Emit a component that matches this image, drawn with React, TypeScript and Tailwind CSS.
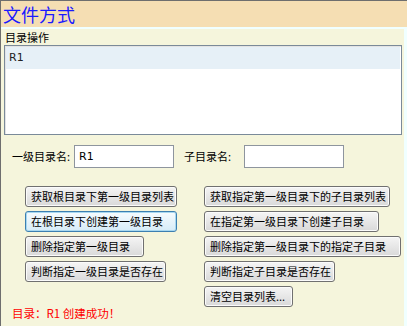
const CJK = "font-['Noto_Sans_CJK_SC',sans-serif]";

type Btn = { label: string; w: string; focused?: boolean };

const leftButtons: Btn[] = [
  { label: "获取根目录下第一级目录列表", w: "w-[152px]" },
  { label: "在根目录下创建第一级目录", w: "w-[152px]", focused: true },
  { label: "删除指定第一级目录", w: "w-[119px]" },
  { label: "判断指定一级目录是否存在", w: "w-[141px]" },
];

const rightButtons: Btn[] = [
  { label: "获取指定第一级目录下的子目录列表", w: "w-[186px]" },
  { label: "在指定第一级目录下创建子目录", w: "w-[175px]" },
  { label: "删除指定第一级目录下的指定子目录", w: "w-[197px]" },
  { label: "判断指定子目录是否存在", w: "w-[131px]" },
  { label: "清空目录列表...", w: "w-[89px]" },
];

function WinButton({ label, w, focused }: Btn) {
  return (
    <button
      className={`${w} h-[21px] shrink-0 rounded-[3px] border pl-[5px] text-left text-[11px] leading-[19px] text-black whitespace-nowrap ${CJK} ${
        focused
          ? "border-[#3c7fb1] bg-gradient-to-b from-[#f6fbfe] to-[#d6ecf8] shadow-[inset_0_0_0_1px_#a8d8f0]"
          : "border-[#707070] bg-gradient-to-b from-[#f5f5f5] to-[#d9d9d9] shadow-[inset_0_0_0_1px_#fbfbfb]"
      }`}
    >
      {label}
    </button>
  );
}

export default function App() {
  return (
    <div className="w-[407px] h-[326px] overflow-hidden bg-[#f0ffff] border-l border-t border-[#6e6e6e] flex flex-col">
      {/* header */}
      <div className={`h-[26px] shrink-0 bg-[#f5deb3] pl-[2px] text-[18px] leading-[26px] text-[#1a1aff] ${CJK}`}>
        文件方式
      </div>

      {/* panel */}
      <div className="mt-[2px] mr-[3px] flex-1 bg-[#f5f5dc] px-[3px] flex flex-col">
        <div className={`h-[16px] pl-[1px] text-[11px] leading-[16px] text-black ${CJK}`}>目录操作</div>

        {/* list box */}
        <div className="w-[398px] h-[90px] border border-[#7a8a99] bg-white p-[1px] shadow-[inset_1px_1px_0_#e3e3e3]">
          <div className="h-[22px] bg-[#e6f0f7] pl-[3px] text-[11px] leading-[22px] text-[#222] font-['DejaVu_Sans',sans-serif]">
            R1
          </div>
        </div>

        {/* name inputs */}
        <div className="mt-[10px] flex items-center pl-[8px]">
          <span className={`w-[62px] text-[11px] text-black ${CJK}`}>一级目录名:</span>
          <div className="w-[100px] h-[23px] border border-[#8e959e] bg-white pl-[4px] text-[11px] leading-[21px] text-black font-['DejaVu_Sans',sans-serif]">
            R1
          </div>
          <span className={`ml-[10px] w-[60px] text-[11px] text-black ${CJK}`}>子目录名:</span>
          <div className="w-[100px] h-[23px] border border-[#8e959e] bg-white" />
        </div>

        {/* buttons */}
        <div className="mt-[18px] flex items-start pl-[8px]">
          <div className="w-[192px] flex flex-col">
            <div className="pl-[13px] flex flex-col gap-[4px]">
              {leftButtons.map((b) => (
                <WinButton key={b.label} {...b} />
              ))}
            </div>
            <div className={`mt-[24px] h-[14px] text-[11.5px] leading-[14px] text-[#ff0000] ${CJK}`}>
              目录：R1 创建成功！
            </div>
          </div>
          <div className="flex flex-col gap-[4px]">
            {rightButtons.map((b) => (
              <WinButton key={b.label} {...b} />
            ))}
          </div>
        </div>
      </div>
    </div>
  );
}
